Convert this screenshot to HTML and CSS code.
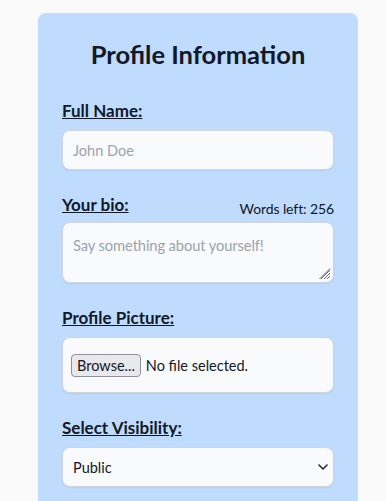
FILE: index.html
```html
<!DOCTYPE html>
<html lang="en">
<head>
<meta charset="utf-8">
<title>Profile Information</title>
<link rel="stylesheet" href="styles.css">
</head>
<body>
<div class="page">
  <form class="card">
    <h2 class="title">Profile Information</h2>

    <div class="field">
      <label class="label" for="name">Full Name:</label>
      <input class="control input" id="name" type="text" placeholder="John Doe">
    </div>

    <div class="field">
      <div class="label-row">
        <label class="label" for="bio">Your bio:</label>
        <span class="counter">Words left: 256</span>
      </div>
      <div class="textarea-wrap">
        <textarea class="control textarea" id="bio" rows="2" placeholder="Say something about yourself!"></textarea>
        <svg class="grip" width="12" height="12" viewBox="0 0 12 12" aria-hidden="true">
          <path d="M11 2L2 11M11 5L5 11M11 8L8 11M11 0.5L0.5 11" fill="none" stroke="#6b6b6b" stroke-width="1"/>
        </svg>
      </div>
    </div>

    <div class="field">
      <label class="label" for="pic">Profile Picture:</label>
      <div class="control filebox">
        <button type="button" class="browse">Browse...</button>
        <span class="filename">No file selected.</span>
      </div>
    </div>

    <div class="field">
      <label class="label" for="vis">Select Visibility:</label>
      <div class="select-wrap">
        <select class="control select" id="vis">
          <option>Public</option>
          <option>Private</option>
        </select>
        <svg class="chevron" width="10" height="6" viewBox="0 0 10 6" aria-hidden="true">
          <path d="M1 1l4 4 4-4" fill="none" stroke="#1f2937" stroke-width="1.6" stroke-linecap="round" stroke-linejoin="round"/>
        </svg>
      </div>
    </div>
  </form>
</div>
</body>
</html>
```

FILE: styles.css
```css
* { box-sizing: border-box; }

html, body {
  margin: 0;
  padding: 0;
  background: #fafafa;
  font-family: Lato, "Noto Sans", sans-serif;
  color: #111827;
}

.page {
  padding: 13px 0 40px 38px;
}

.card {
  width: 320px;
  background: #bfdbfe;
  border-radius: 8px;
  padding: 24px 24px 24px 24px;
}

.title {
  margin: 0 0 29px 0;
  font-size: 25.5px;
  line-height: 34px;
  font-weight: 700;
  text-align: center;
  color: #111827;
}

.field {
  margin-bottom: 24px;
}

.label-row {
  display: flex;
  justify-content: space-between;
  align-items: center;
}

.label {
  display: block;
  font-size: 17px;
  line-height: 22px;
  font-weight: 700;
  text-decoration: underline;
  margin-bottom: 8px;
  color: #111827;
}

.label-row .label {
  margin-bottom: 6px;
}

.counter {
  font-size: 14px;
  line-height: 20px;
  letter-spacing: -0.1px;
  color: #111827;
  padding-top: 2px;
}

.control {
  display: block;
  width: 100%;
  background: #f8fafc;
  border: 1px solid #d1d5db;
  border-radius: 8px;
  box-shadow: 0 1px 2px rgba(0, 0, 0, 0.06);
  font-family: inherit;
  font-size: 14.5px;
  color: #111827;
  outline: none;
}

.input {
  height: 40px;
  padding: 0 10px;
}

.textarea-wrap {
  position: relative;
}

.textarea {
  height: 61px;
  padding: 12px 10px 8px 10px;
  font-size: 14.7px;
  letter-spacing: -0.1px;
  line-height: 20px;
  resize: none;
}

.grip {
  position: absolute;
  right: 3px;
  bottom: 3px;
  pointer-events: none;
}

.input::placeholder,
.textarea::placeholder {
  color: #9ca3af;
}

.filebox {
  display: flex;
  align-items: center;
  gap: 5px;
  height: 56px;
  padding: 0 8px;
}

.browse {
  height: 23px;
  padding: 0 5px;
  background: #e9e9ed;
  border: 1px solid #8f8f9d;
  border-radius: 4px;
  font-family: inherit;
  font-size: 14.5px;
  color: #111827;
}

.filename {
  font-size: 14.5px;
  color: #111827;
}

.select-wrap {
  position: relative;
}

.select {
  height: 40px;
  padding: 0 30px 0 10px;
  appearance: none;
  -webkit-appearance: none;
}

.chevron {
  position: absolute;
  right: 6px;
  top: 17px;
  pointer-events: none;
}
```
